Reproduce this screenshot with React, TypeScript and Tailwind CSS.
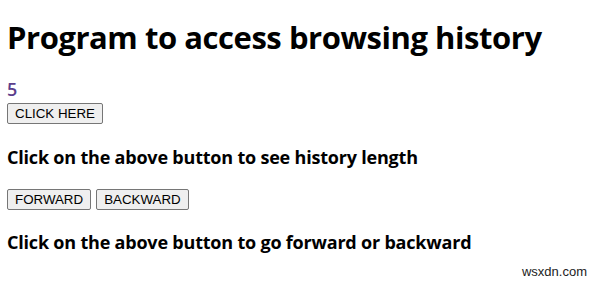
const btn =
  "h-[21px] px-[7px] border border-[#767676] rounded-[2px] bg-[#efefef] text-[13.33px] leading-none text-black";

const App = () => {
  return (
    <div className="relative h-[284px] w-[599px] bg-white px-[7px] font-['Open_Sans',sans-serif] text-black">
      <h1 className="pt-[17px] text-[31px] font-bold leading-[40px] tracking-[-0.45px]">
        Program to access browsing history
      </h1>
      <div className="mt-[22px] text-[18px] font-semibold leading-[20px] text-[#5b3e8c]">5</div>
      <div className="mt-[2px] font-['Liberation_Sans',sans-serif]">
        <button className={btn}>CLICK HERE</button>
      </div>
      <h3 className="mt-[20px] text-[18px] font-bold leading-[24px] tracking-[-0.2px]">
        Click on the above button to see history length
      </h3>
      <div className="mt-[20px] flex gap-[5px] font-['Liberation_Sans',sans-serif]">
        <button className={btn}>FORWARD</button>
        <button className={btn}>BACKWARD</button>
      </div>
      <h3 className="mt-[20px] text-[18px] font-bold leading-[24px] tracking-[-0.2px]">
        Click on the above button to go forward or backward
      </h3>
      <span className="absolute bottom-[6px] right-[12px] font-['Liberation_Sans',sans-serif] text-[13px] leading-none text-[#222]">
        wsxdn.com
      </span>
    </div>
  );
};

export default App;
